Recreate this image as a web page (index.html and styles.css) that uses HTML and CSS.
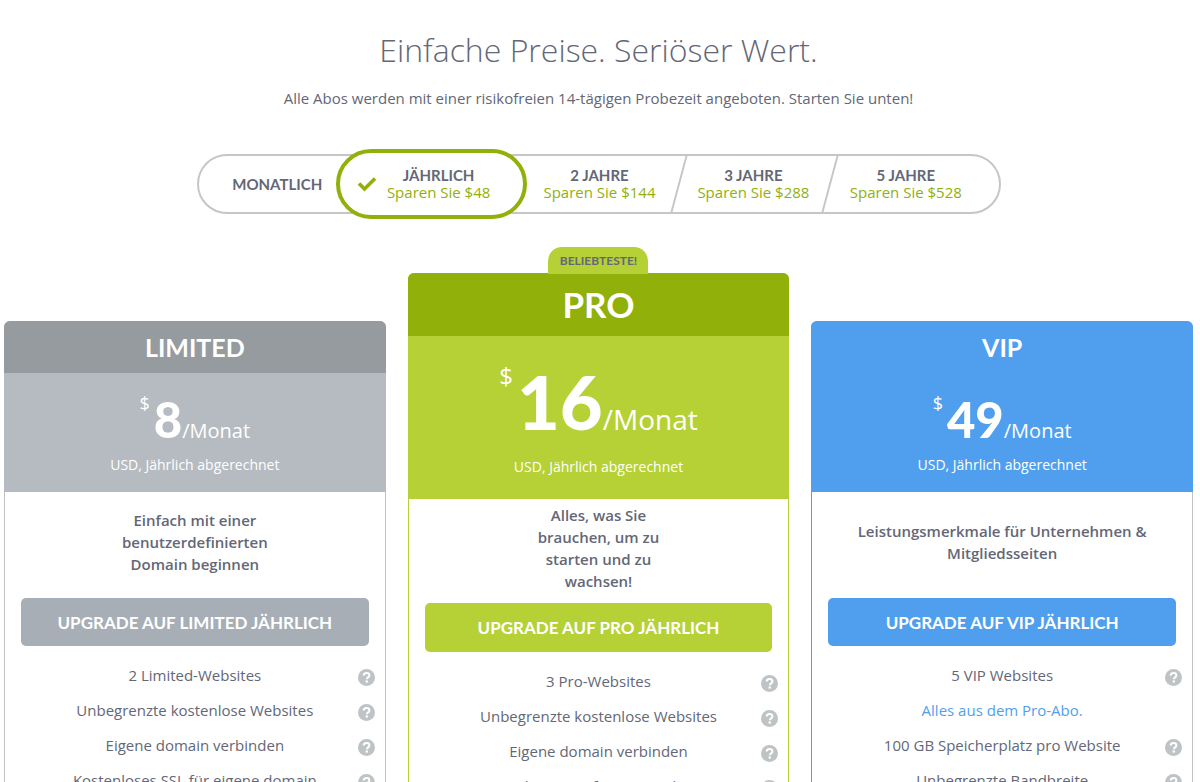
FILE: index.html
```html
<!DOCTYPE html>
<html lang="de">

<head>
    <meta charset="UTF-8">
    <meta name="viewport" content="width=device-width, initial-scale=1.0">
    <title>Preise</title>
    <link rel="stylesheet" href="styles.css">
</head>

<body>

    <!-- Icons -->
    <svg class="sprite" aria-hidden="true">
        <symbol id="icon-help" viewBox="0 0 17 17">
            <circle cx="8.5" cy="8.5" r="8.5" fill="#bec3c5" />
            <path d="M5.7 6.5C5.7 4.8 6.9 4 8.5 4s2.9.9 2.9 2.4c0 1.9-2.5 2-2.5 3.8" fill="none" stroke="#fff" stroke-width="2" />
            <rect x="7.6" y="11.4" width="2.3" height="2.2" fill="#fff" />
        </symbol>
    </svg>

    <header class="intro">
        <h1>Einfache Preise. Seriöser Wert.</h1>
        <p>Alle Abos werden mit einer risikofreien 14-tägigen Probezeit angeboten. Starten Sie unten!</p>
    </header>

    <div class="periods" role="radiogroup" aria-label="Laufzeit">
        <label class="period period-first">
            <input type="radio" name="period" value="1m">
            <span class="period-text"><b>MONATLICH</b></span>
        </label>
        <label class="period active">
            <input type="radio" name="period" value="1y" checked>
            <svg class="check" viewBox="0 0 20 16" aria-hidden="true"><path d="M2 7.5l5.5 5.5L18 2.5" fill="none" stroke="#91b00a" stroke-width="3.6" /></svg>
            <span class="period-text"><b>JÄHRLICH</b><span class="save">Sparen Sie $48</span></span>
        </label>
        <label class="period period-after">
            <input type="radio" name="period" value="2y">
            <span class="period-text"><b>2 JAHRE</b><span class="save">Sparen Sie $144</span></span>
        </label>
        <label class="period slanted">
            <input type="radio" name="period" value="3y">
            <span class="period-text"><b>3 JAHRE</b><span class="save">Sparen Sie $288</span></span>
        </label>
        <label class="period slanted period-last">
            <input type="radio" name="period" value="5y">
            <span class="period-text"><b>5 JAHRE</b><span class="save">Sparen Sie $528</span></span>
        </label>
    </div>

    <main class="plans">
        <section class="plan limited">
            <h2>LIMITED</h2>
            <div class="price">
                <div class="amount"><span class="currency">$</span><strong>8</strong><span class="per">/Monat</span></div>
                <div class="billed">USD, Jährlich abgerechnet</div>
            </div>
            <p class="desc"><span>Einfach mit einer<br>benutzerdefinierten<br>Domain beginnen</span></p>
            <button class="btn" type="button">UPGRADE AUF LIMITED JÄHRLICH</button>
            <ul class="features">
                <li>2 Limited-Websites <svg class="help"><use href="#icon-help" /></svg></li>
                <li>Unbegrenzte kostenlose Websites <svg class="help"><use href="#icon-help" /></svg></li>
                <li>Eigene domain verbinden <svg class="help"><use href="#icon-help" /></svg></li>
                <li>Kostenloses SSL für eigene domain <svg class="help"><use href="#icon-help" /></svg></li>
            </ul>
        </section>

        <section class="plan pro">
            <div class="badge">BELIEBTESTE!</div>
            <h2>PRO</h2>
            <div class="price">
                <div class="amount"><span class="currency">$</span><strong>16</strong><span class="per">/Monat</span></div>
                <div class="billed">USD, Jährlich abgerechnet</div>
            </div>
            <p class="desc"><span>Alles, was Sie<br>brauchen, um zu<br>starten und zu<br>wachsen!</span></p>
            <button class="btn" type="button">UPGRADE AUF PRO JÄHRLICH</button>
            <ul class="features">
                <li>3 Pro-Websites <svg class="help"><use href="#icon-help" /></svg></li>
                <li>Unbegrenzte kostenlose Websites <svg class="help"><use href="#icon-help" /></svg></li>
                <li>Eigene domain verbinden <svg class="help"><use href="#icon-help" /></svg></li>
                <li>Kostenloses SSL für eigene domain <svg class="help"><use href="#icon-help" /></svg></li>
            </ul>
        </section>

        <section class="plan vip">
            <h2>VIP</h2>
            <div class="price">
                <div class="amount"><span class="currency">$</span><strong>49</strong><span class="per">/Monat</span></div>
                <div class="billed">USD, Jährlich abgerechnet</div>
            </div>
            <p class="desc"><span>Leistungsmerkmale für Unternehmen &amp;<br>Mitgliedsseiten</span></p>
            <button class="btn" type="button">UPGRADE AUF VIP JÄHRLICH</button>
            <ul class="features">
                <li>5 VIP Websites <svg class="help"><use href="#icon-help" /></svg></li>
                <li><a href="#">Alles aus dem Pro-Abo.</a></li>
                <li>100 GB Speicherplatz pro Website <svg class="help"><use href="#icon-help" /></svg></li>
                <li>Unbegrenzte Bandbreite <svg class="help"><use href="#icon-help" /></svg></li>
            </ul>
        </section>
    </main>

</body>

</html>
```
FILE: styles.css
```css
* {
    box-sizing: border-box;
}

body {
    margin: 0;
    padding: 0 7px 0 4px;
    font-family: "Open Sans", "Noto Sans", sans-serif;
    font-size: 15px;
    color: #636777;
    background: #fff;
}

.sprite {
    display: none;
}

.intro {
    text-align: center;
    padding-top: 26px;
}

.intro h1 {
    margin: 0;
    font-size: 32px;
    font-weight: 300;
    line-height: 48px;
}

.intro p {
    margin: 12px 0 0;
    line-height: 24px;
}

/* Laufzeit */
.periods {
    display: grid;
    grid-template-columns: 138fr 192fr 151fr 152fr 170fr;
    max-width: 804px;
    height: 60px;
    margin: 44px auto 0;
    border: 2px solid #c3c7ca;
    border-radius: 30px;
}

.period {
    position: relative;
    display: flex;
    align-items: center;
    justify-content: center;
    cursor: pointer;
}

.period input {
    position: absolute;
    opacity: 0;
    margin: 0;
}

.period-text {
    display: flex;
    flex-direction: column;
    align-items: center;
    line-height: 17px;
}

.period b {
    font-family: Lato, sans-serif;
    font-size: 15px;
    font-weight: 700;
}

.period-first {
    padding-left: 20px;
}

.period-after {
    padding-right: 6px;
}

.period-last {
    padding-right: 16px;
}

.save {
    color: #91b00a;
    white-space: nowrap;
}

.active {
    gap: 10px;
    margin: -7px 0;
    padding-right: 16px;
    background: #fff;
    border: 4px solid #91b00a;
    border-radius: 35px;
}

.check {
    width: 20px;
    height: 16px;
}

.slanted::before {
    content: "";
    position: absolute;
    left: 0;
    top: 0;
    bottom: 0;
    border-left: 2px solid #c3c7ca;
    transform: skewX(-15deg);
}

/* Abos */
.plans {
    display: grid;
    grid-template-columns: repeat(3, 1fr);
    gap: 22px;
    align-items: start;
    margin-top: 59px;
}

.plan {
    position: relative;
    margin-top: 48px;
    padding-bottom: 20px;
    text-align: center;
    border: 1px solid #bec3c5;
    border-radius: 6px;
}

.plan h2 {
    margin: -1px -1px 0;
    font-family: Lato, sans-serif;
    font-size: 25px;
    font-weight: 700;
    line-height: 52px;
    color: #fff;
    border-radius: 6px 6px 0 0;
}

.price {
    height: 119px;
    margin: 0 -1px;
    padding-top: 12px;
    color: #fff;
}

.amount {
    display: flex;
    justify-content: center;
    align-items: baseline;
    height: 68px;
    line-height: 68px;
}

.amount strong {
    font-family: Lato, sans-serif;
    font-size: 49px;
    font-weight: 900;
}

.currency {
    align-self: flex-start;
    margin-right: 4px;
    font-size: 18px;
    line-height: 36px;
}

.per {
    font-size: 20px;
}

.billed {
    font-size: 14px;
    line-height: 24px;
}

.desc {
    display: flex;
    align-items: center;
    justify-content: center;
    height: 106px;
    margin: 0;
    padding-bottom: 6px;
    font-weight: 600;
    line-height: 22px;
}

.btn {
    display: block;
    width: calc(100% - 32px);
    height: 48px;
    margin: 0 auto;
    padding: 0;
    border: none;
    border-radius: 5px;
    font-family: Lato, sans-serif;
    font-size: 17px;
    font-weight: 700;
    color: #fff;
    cursor: pointer;
}

.features {
    list-style: none;
    margin: 12px 0 0;
    padding: 0;
    font-weight: 500;
    line-height: 35px;
}

.features li {
    position: relative;
}

.features a {
    color: #509fee;
    text-decoration: none;
}

.help {
    position: absolute;
    top: 11px;
    right: 10px;
    width: 17px;
    height: 17px;
}

.limited h2 {
    background: #959b9f;
}

.limited .price {
    background: #b5bbc0;
}

.limited .btn {
    background: #a7aeb6;
}

.pro {
    margin-top: 0;
    border-color: #b5d135;
}

.badge {
    position: absolute;
    bottom: 100%;
    left: 50%;
    width: 100px;
    margin-left: -50px;
    font-family: Lato, sans-serif;
    font-size: 12px;
    font-weight: 700;
    line-height: 27px;
    background: #b5d135;
    border-radius: 14px 14px 0 0;
}

.pro h2 {
    font-size: 35px;
    line-height: 63px;
    background: #91b00a;
}

.pro .price {
    height: 163px;
    background: #b5d135;
}

.pro .amount {
    height: 107px;
    line-height: 107px;
}

.pro .amount strong {
    font-size: 74px;
}

.pro .currency {
    font-size: 24px;
    line-height: 56px;
}

.pro .per {
    font-size: 28px;
}

.pro .desc {
    height: 104px;
}

.pro .btn {
    height: 49px;
    background: #b5d135;
}

.vip {
    border-left-color: #509fee;
}

.vip h2,
.vip .price,
.vip .btn {
    background: #509fee;
}
```
